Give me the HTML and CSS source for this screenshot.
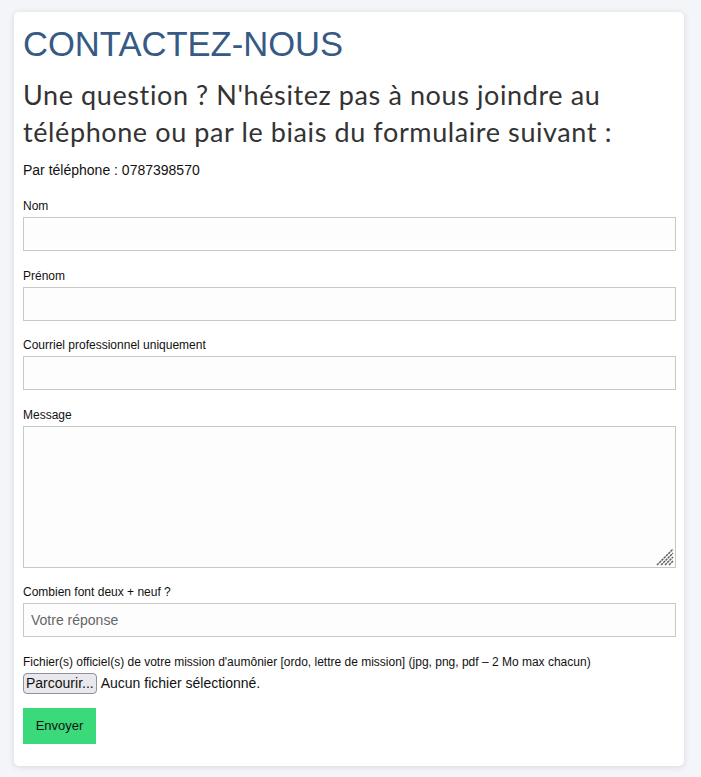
FILE: index.html
```html
<!DOCTYPE html>
<html lang="fr">
<head>
<meta charset="utf-8">
<title>Contactez-nous</title>
<link rel="stylesheet" href="styles.css">
</head>
<body>
<main class="page">
  <section class="card">
    <h1 class="title">CONTACTEZ-NOUS</h1>
    <h2 class="subtitle">Une question ? N'hésitez pas à nous joindre au téléphone ou par le biais du formulaire suivant :</h2>
    <p class="phone">Par téléphone : 0787398570</p>
    <form class="form">
      <div class="field">
        <label class="label" for="nom">Nom</label>
        <input class="input" id="nom" type="text">
      </div>
      <div class="field">
        <label class="label" for="prenom">Prénom</label>
        <input class="input" id="prenom" type="text">
      </div>
      <div class="field">
        <label class="label" for="mail">Courriel professionnel uniquement</label>
        <input class="input" id="mail" type="text">
      </div>
      <div class="field">
        <label class="label" for="msg">Message</label>
        <div class="textarea-wrap">
          <textarea class="input textarea" id="msg"></textarea>
          <svg class="grip" width="18" height="18" viewBox="0 0 18 18" aria-hidden="true">
            <g stroke="#5f5f5f" stroke-width="1.5" stroke-dasharray="2.5 0.7">
              <line x1="1" y1="17" x2="17" y2="1"/>
              <line x1="5" y1="17" x2="17" y2="5"/>
              <line x1="9" y1="17" x2="17" y2="9"/>
              <line x1="13" y1="17" x2="17" y2="13"/>
            </g>
          </svg>
        </div>
      </div>
      <div class="field">
        <label class="label" for="captcha">Combien font deux + neuf ?</label>
        <input class="input" id="captcha" type="text" placeholder="Votre réponse">
      </div>
      <div class="field field-file">
        <span class="label">Fichier(s) officiel(s) de votre mission d'aumônier [ordo, lettre de mission] (jpg, png, pdf – 2 Mo max chacun)</span>
        <div class="file-row">
          <span class="file-btn">Parcourir...</span>
          <span class="file-text">Aucun fichier sélectionné.</span>
        </div>
      </div>
      <button class="submit" type="button">Envoyer</button>
    </form>
  </section>
</main>
</body>
</html>
```

FILE: styles.css
```css
* { box-sizing: border-box; }

html, body {
  margin: 0;
  padding: 0;
  background: #f4f5f9;
}

body {
  font-family: "Liberation Sans", Arial, sans-serif;
  color: #111;
}

.page {
  padding: 12px 17px 12px 14px;
}

.card {
  width: 670px;
  background: #fff;
  border-radius: 5px;
  box-shadow: 0 1px 6px rgba(0, 0, 0, 0.12);
  padding: 13px 8px 22px 9px;
}

.title {
  margin: 0;
  font-family: "Liberation Sans", Arial, sans-serif;
  font-weight: 400;
  font-size: 34.6px;
  line-height: 39px;
  color: #365a83;
}

.subtitle {
  margin: 12px 0 0;
  font-family: Lato, "Open Sans", sans-serif;
  font-weight: 400;
  font-size: 27px;
  line-height: 37px;
  letter-spacing: 0.6px;
  color: #333;
}

.phone {
  margin: 12px 0 0;
  font-size: 14px;
  line-height: 16px;
  color: #111;
}

.form {
  margin-top: 21px;
  display: flex;
  flex-direction: column;
  align-items: flex-start;
}

.field {
  width: 100%;
  margin-bottom: 17.5px;
  display: flex;
  flex-direction: column;
}

.label {
  display: block;
  font-size: 12px;
  line-height: 14px;
  margin-bottom: 4px;
  color: #111;
}

.input {
  display: block;
  width: 100%;
  height: 34px;
  margin: 0;
  border: 1px solid #c8c8c8;
  border-radius: 0;
  background: #fdfdfd;
  padding: 0 7px;
  font-family: "Liberation Sans", Arial, sans-serif;
  font-size: 14px;
  color: #222;
}

.input::placeholder {
  color: #666;
}

.textarea-wrap {
  position: relative;
}

.textarea {
  height: 142px;
  resize: none;
}

.grip {
  position: absolute;
  right: 2px;
  bottom: 2px;
  pointer-events: none;
}

.field-file {
  margin-bottom: 14px;
}

.file-row {
  display: flex;
  align-items: center;
  gap: 4px;
}

.file-btn {
  display: inline-block;
  height: 21px;
  padding: 0 2px;
  line-height: 19px;
  font-size: 14px;
  color: #111;
  background: #e9e9ed;
  border: 1px solid #8f8f9d;
  border-radius: 4px;
}

.file-text {
  font-size: 14px;
  color: #111;
}

.submit {
  width: 73px;
  height: 36px;
  border: none;
  border-radius: 0;
  background: #3ad97a;
  font-family: "Liberation Sans", Arial, sans-serif;
  font-size: 13px;
  color: #111;
  padding: 0;
}
```
